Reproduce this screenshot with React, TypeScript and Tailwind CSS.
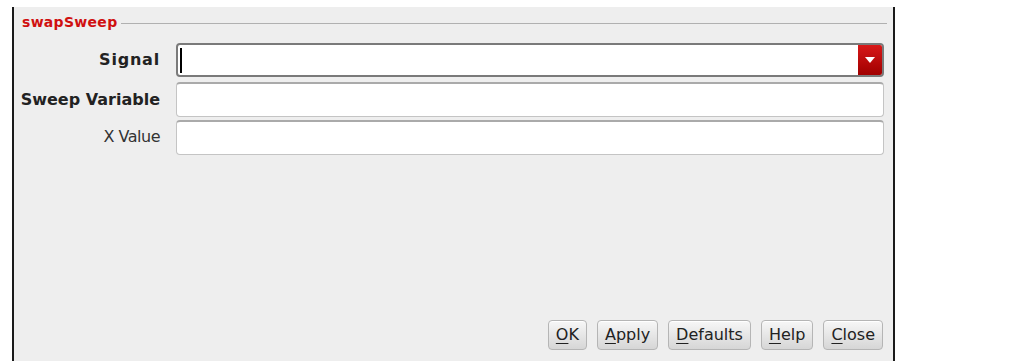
function Btn({ mn, rest }: { mn: string; rest: string }) {
  return (
    <button className="h-[30px] px-[7px] rounded-[4px] border border-[#b5b5b5] bg-gradient-to-b from-[#f7f7f7] to-[#d6d6d6] text-[16px] text-[#222] leading-none shadow-[0_1px_0_#fff_inset]">
      <span className="underline underline-offset-[3px]">{mn}</span>
      {rest}
    </button>
  );
}

export default function App() {
  const font = { fontFamily: '"DejaVu Sans", sans-serif' };
  return (
    <div className="w-[1016px] h-[361px] bg-white pt-[7px] pl-[12px] overflow-hidden" style={font}>
      <div className="w-[883px] h-[354px] border-l-2 border-r-2 border-[#1a1a1a] bg-[#eeeeee] flex flex-col">
        <div className="flex items-center pl-[8px] pr-[6px] pt-[5px] h-[26px]">
          <span className="text-[14px] font-bold text-[#d01010] tracking-[0.3px]">swapSweep</span>
          <div className="flex-1 h-px bg-[#b0b0b0] ml-[4px] mt-[1px]" />
        </div>

        <div className="grid grid-cols-[146px_708px] gap-x-[16px] gap-y-[5px] mt-[10px] items-center">
          <div className="text-right text-[16px] font-bold text-[#222] tracking-[0.8px]">Signal</div>
          <div className="h-[34px] flex rounded-[4px] border-2 border-[#7a7a7a] bg-white overflow-hidden">
            <div className="flex-1 flex items-center pl-[2px]">
              <div className="w-[2px] h-[25px] bg-black" />
            </div>
            <div className="w-[24px] bg-gradient-to-b from-[#d81818] to-[#a00000] flex items-center justify-center">
              <svg width="10" height="6" viewBox="0 0 10 6"><path d="M0 0h10L5 6z" fill="#fff" /></svg>
            </div>
          </div>

          <div className="text-right text-[16px] font-bold text-[#222] whitespace-nowrap">Sweep Variable</div>
          <div className="h-[35px] rounded-[4px] border border-[#c4c4c4] border-t-2 border-t-[#aaa] bg-white" />

          <div className="text-right text-[16px] text-[#333] tracking-[-0.5px] -mt-[4px]">X Value</div>
          <div className="h-[35px] rounded-[4px] border border-[#c4c4c4] border-t-2 border-t-[#aaa] bg-white -mt-[2px]" />
        </div>

        <div className="flex-1" />
        <div className="flex justify-end gap-[10px] pr-[10px] pb-[11px]">
          <Btn mn="O" rest="K" />
          <Btn mn="A" rest="pply" />
          <Btn mn="D" rest="efaults" />
          <Btn mn="H" rest="elp" />
          <Btn mn="C" rest="lose" />
        </div>
      </div>
    </div>
  );
}
